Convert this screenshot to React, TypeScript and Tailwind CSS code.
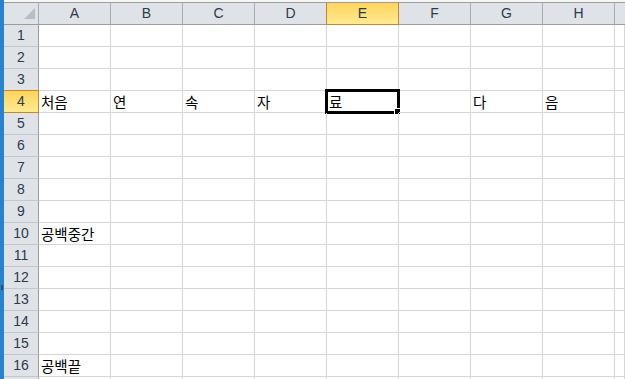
const cols = ["A", "B", "C", "D", "E", "F", "G", "H"];

const cells: Record<number, string[]> = {
  4: ["처음", "연", "속", "자", "료", "", "다", "음"],
  10: ["공백중간"],
  16: ["공백끝"],
};

const SEL_COL = 4; // E
const SEL_ROW = 4;

export default function App() {
  // row 17 only peeks in at the bottom edge, its number stays hidden
  const rows = Array.from({ length: 17 }, (_, i) => i + 1);

  return (
    <div className="relative flex h-[379px] w-[625px] overflow-hidden bg-white font-['Liberation_Sans',sans-serif]">
      {/* blue window edge */}
      <div className="relative w-[4px] shrink-0 bg-[#2583cf]">
        <div className="absolute left-[1px] top-[285px] h-[5px] w-[2px] bg-[#3c4a5a]"></div>
      </div>

      {/* SHEET */}
      <div className="flex min-w-0 flex-1 flex-col">
        <div className="h-[2px] shrink-0 bg-[#f7f7f7]"></div>

        {/* column headers */}
        <div className="flex h-[23px] shrink-0">
          <div className="relative w-[35px] shrink-0 border-y border-r border-y-[#9c9c9c] border-r-[#ababab] bg-[#dfe3e8]">
            <svg className="absolute left-0 top-0" width="34" height="21" viewBox="0 0 34 21">
              <polygon points="20,16 31,16 31,5" fill="#b6bdc7" />
            </svg>
          </div>
          {cols.map((c, i) => (
            <div
              key={c}
              className={`flex w-[72px] shrink-0 items-center justify-center border-y border-r border-t-[#9c9c9c] text-[14px] text-[#2d3a48] ${
                i === SEL_COL
                  ? "border-b-[#c5872a] border-r-[#c5872a] bg-gradient-to-b from-[#ffd45a] to-[#ffea92]"
                  : i === SEL_COL - 1
                    ? "border-b-[#9c9c9c] border-r-[#c5872a] bg-[#dfe3e8]"
                    : "border-b-[#9c9c9c] border-r-[#a9adb3] bg-[#dfe3e8]"
              }`}
            >
              {c}
            </div>
          ))}
          <div className="flex-1 border-y border-y-[#9c9c9c] bg-[#dfe3e8]"></div>
        </div>

        {/* rows */}
        {rows.map((r) => (
          <div key={r} className="flex h-[22px] shrink-0">
            <div
              className={`flex w-[35px] shrink-0 items-center justify-center border-b border-r text-[14px] text-[#2d3a48] ${
                r === SEL_ROW
                  ? "border-b-[#c5872a] border-r-[#c5872a] bg-gradient-to-b from-[#ffd45a] to-[#ffea92]"
                  : r === SEL_ROW - 1
                    ? "border-b-[#c5872a] border-r-[#9c9c9c] bg-[#dfe3e8]"
                    : "border-b-[#c4c8cd] border-r-[#9c9c9c] bg-[#dfe3e8]"
              }`}
            >
              {r < 17 ? r : ""}
            </div>
            {cols.map((c, i) => (
              <div
                key={c}
                className="relative flex w-[72px] shrink-0 items-center whitespace-nowrap border-b border-r border-[#d6d6d6] pl-[2px] font-['Noto_Sans_CJK_KR',sans-serif] text-[14.5px] leading-[21px] text-black"
              >
                {cells[r]?.[i] ?? ""}
                {r === SEL_ROW && i === SEL_COL && (
                  <>
                    <div className="absolute left-[-2px] top-[-2px] h-[25px] w-[75px] border-[3px] border-black"></div>
                    <div className="absolute left-[67px] top-[17px] h-[7px] w-[7px] border border-white bg-black"></div>
                  </>
                )}
              </div>
            ))}
            <div className="flex-1 border-b border-r border-[#d6d6d6]"></div>
          </div>
        ))}
      </div>
    </div>
  );
}
